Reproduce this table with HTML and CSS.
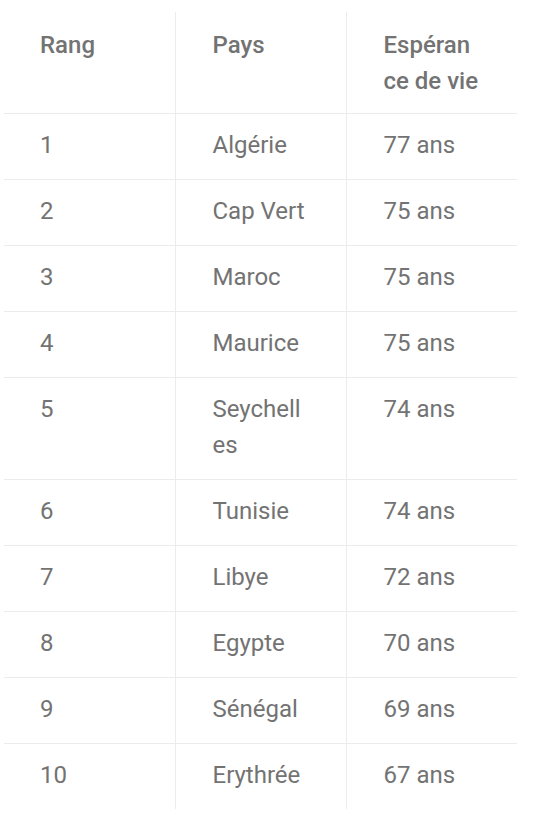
FILE: index.html
```html
<!DOCTYPE html>
<html lang="fr">
<head>
<meta charset="utf-8">
<link rel="stylesheet" href="styles.css">
</head>
<body>
<table class="life-table">
  <thead>
    <tr><th>Rang</th><th>Pays</th><th>Espérance de vie</th></tr>
  </thead>
  <tbody>
    <tr><td>1</td><td>Algérie</td><td>77 ans</td></tr>
    <tr><td>2</td><td>Cap Vert</td><td>75 ans</td></tr>
    <tr><td>3</td><td>Maroc</td><td>75 ans</td></tr>
    <tr><td>4</td><td>Maurice</td><td>75 ans</td></tr>
    <tr><td>5</td><td>Seychelles</td><td>74 ans</td></tr>
    <tr><td>6</td><td>Tunisie</td><td>74 ans</td></tr>
    <tr><td>7</td><td>Libye</td><td>72 ans</td></tr>
    <tr><td>8</td><td>Egypte</td><td>70 ans</td></tr>
    <tr><td>9</td><td>Sénégal</td><td>69 ans</td></tr>
    <tr><td>10</td><td>Erythrée</td><td>67 ans</td></tr>
  </tbody>
</table>
</body>
</html>
```
FILE: styles.css
```css
html, body {
  margin: 0;
  padding: 0;
  background: #ffffff;
}
body {
  padding: 12px 0 0 4px;
  font-family: Roboto, "Liberation Sans", sans-serif;
  color: #737373;
}
.life-table {
  width: 513px;
  table-layout: fixed;
  border-collapse: collapse;
  border-spacing: 0;
}
.life-table th,
.life-table td {
  box-sizing: border-box;
  width: 171px;
  padding: 15px 37px 14px 36px;
  font-size: 24px;
  line-height: 36px;
  text-align: left;
  vertical-align: top;
  word-break: break-all;
  border-bottom: 1px solid #ececec;
}
.life-table th {
  font-weight: 500;
}
.life-table td {
  font-weight: 400;
  padding-top: 13px;
  padding-bottom: 16px;
}
.life-table th + th,
.life-table td + td {
  border-left: 1px solid #ececec;
  padding-left: 37px;
}
.life-table tbody tr:last-child td {
  border-bottom: none;
}
```
